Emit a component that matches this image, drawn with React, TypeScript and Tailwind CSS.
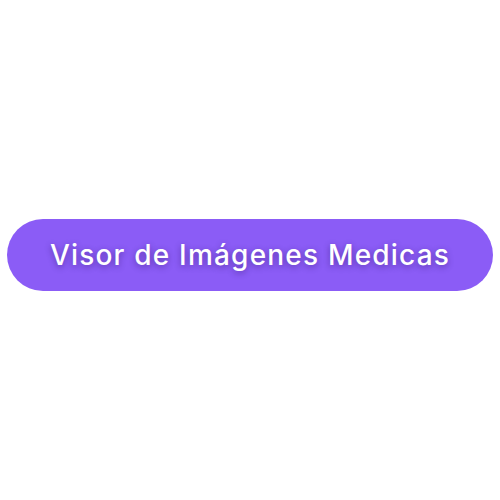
export default function App() {
  return (
    <div className="w-[500px] h-[500px] bg-white flex items-center justify-center pt-[10px]">
      <div className="w-[486px] h-[72px] rounded-full bg-[#8b5cf6] flex items-center justify-center">
        <span
          className="text-white text-[28px] font-medium tracking-[1.2px] [text-shadow:0_2px_6px_rgba(40,10,90,0.45)]"
          style={{ fontFamily: "Inter, 'Noto Sans', sans-serif" }}
        >
          Visor de Imágenes Medicas
        </span>
      </div>
    </div>
  );
}
